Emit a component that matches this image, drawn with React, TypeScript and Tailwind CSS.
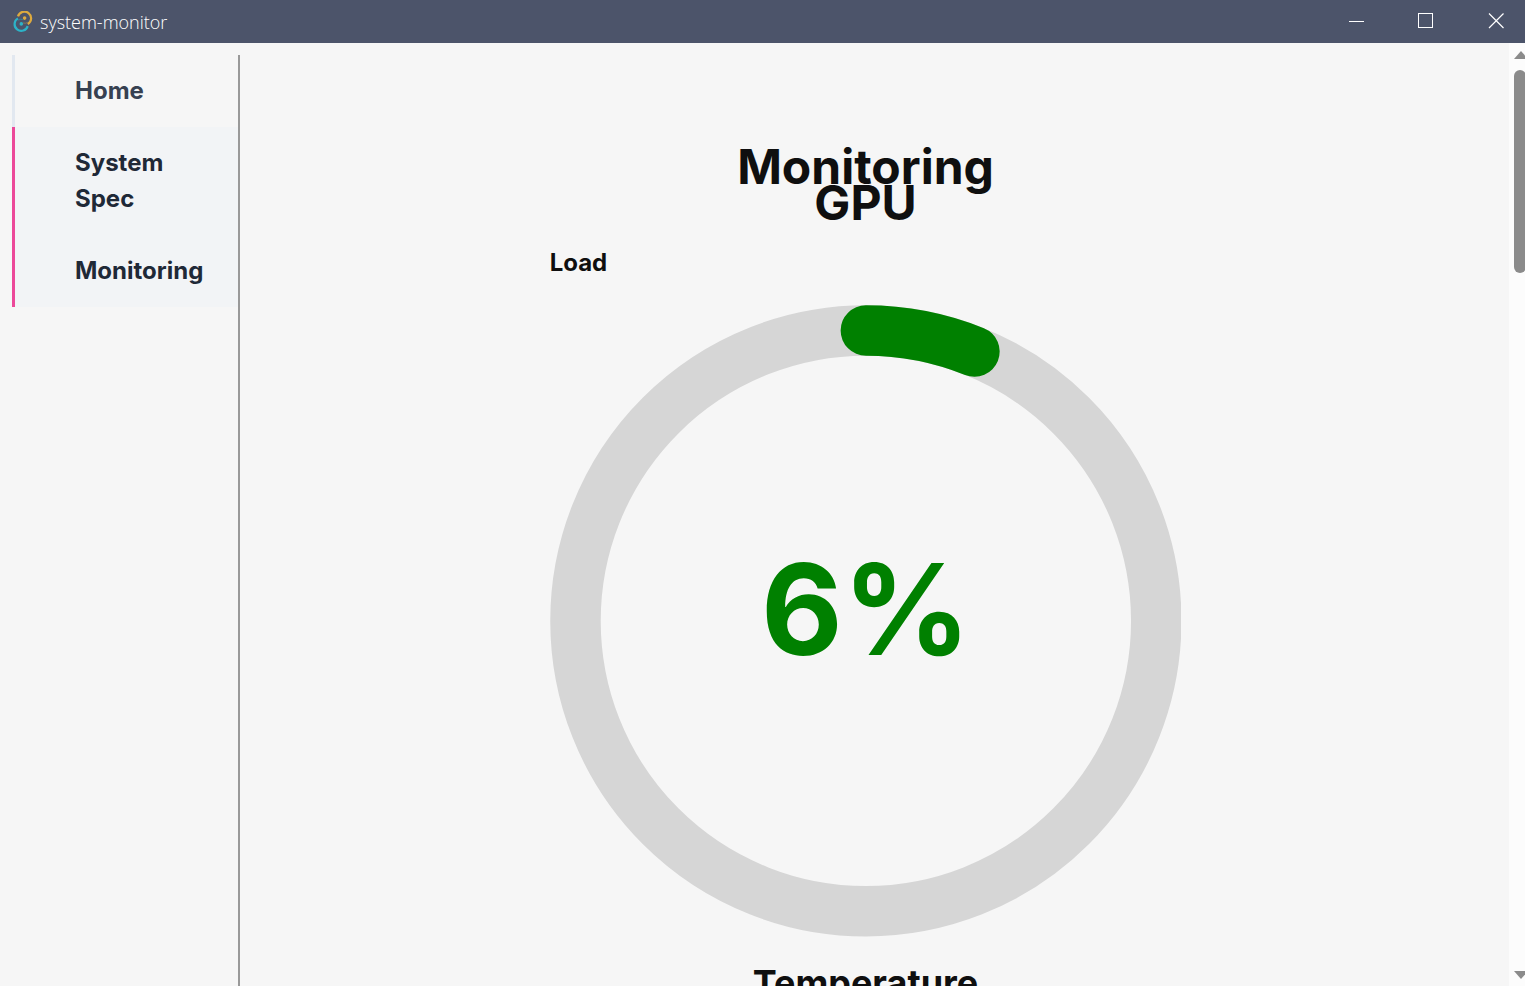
import React from "react";

type NavItem = { label: string; active: boolean };

const navItems: NavItem[] = [
  { label: "Home", active: false },
  { label: "System Spec", active: true },
  { label: "Monitoring", active: true },
];

function AppLogo() {
  return (
    <svg viewBox="0 0 22 22" className="size-[22px]" fill="none" aria-hidden="true">
      <path d="M6 5.4A6.7 6.7 0 1 1 15.8 13.1" stroke="#deaa3e" strokeWidth="2.2" />
      <path d="M15.7 15.1A6.7 6.7 0 1 1 5.9 7.4" stroke="#2cb3c8" strokeWidth="2.2" />
      <path d="M6 9.2Q8.5 7.6 11 8.6" stroke="#2cb3c8" strokeWidth="1" opacity="0.4" />
      <path d="M15.7 11.3Q13.5 12.8 11 12" stroke="#deaa3e" strokeWidth="1" opacity="0.4" />
      <circle cx="12.6" cy="7.1" r="1.8" fill="#deaa3e" />
      <circle cx="9.3" cy="12.9" r="1.8" fill="#2cb3c8" />
    </svg>
  );
}

function TitleBar() {
  return (
    <header className="flex h-[43px] shrink-0 items-center justify-between bg-[#4c546a] pl-3 text-white">
      <div className="flex items-center gap-1.5">
        <AppLogo />
        <span className="font-['Open_Sans','Noto_Sans',sans-serif] text-lg leading-6 font-light">system-monitor</span>
      </div>
      <div className="flex h-full items-center gap-[13px] pr-0.5 pb-px">
        <button type="button" aria-label="Minimize" className="flex h-full w-14 items-center justify-center">
          <svg viewBox="0 0 16 16" className="size-4" shapeRendering="crispEdges" aria-hidden="true">
            <path d="M0 8.5H15" stroke="white" />
          </svg>
        </button>
        <button type="button" aria-label="Maximize" className="flex h-full w-14 items-center justify-center">
          <svg viewBox="0 0 16 16" className="size-4" fill="none" aria-hidden="true">
            <rect x="0.5" y="0.5" width="14" height="14" stroke="white" />
          </svg>
        </button>
        <button type="button" aria-label="Close" className="flex h-full w-14 items-center justify-center">
          <svg viewBox="0 0 16 16" className="size-4 overflow-visible" aria-hidden="true">
            <path d="M2 0.5L16.5 15M16.5 0.5L2 15" stroke="white" strokeWidth="1.2" />
          </svg>
        </button>
      </div>
    </header>
  );
}

function Sidebar() {
  return (
    <nav className="w-[228px] shrink-0 border-r-2 border-[#999999] text-2xl leading-9 font-bold">
      {navItems.map((item) => (
        <a
          key={item.label}
          href="#"
          className={
            item.active
              ? "block border-l-3 border-[#ec4899] bg-[#f2f4f6] py-[18px] pr-[30px] pl-[60px] text-[#1f2937]"
              : "block border-l-3 border-[#e2e8f0] py-[18px] pr-[30px] pl-[60px] text-[#374151]"
          }
        >
          {item.label}
        </a>
      ))}
    </nav>
  );
}

function Gauge({ percent }: { percent: number }) {
  const label = `${Math.round(percent)}%`;
  return (
    <svg viewBox="0 0 632 632" className="block w-full" role="img" aria-label={`Load ${label}`}>
      <circle cx="316" cy="316" r="290.5" fill="none" stroke="#d6d6d6" strokeWidth="50.5" />
      <circle
        cx="316"
        cy="316"
        r="290.5"
        fill="none"
        stroke="#008000"
        strokeWidth="50.5"
        strokeLinecap="round"
        pathLength="100"
        strokeDasharray={`${percent} 100`}
        transform="rotate(-90 316 316)"
      />
      <text x="316" y="350" textAnchor="middle" fontSize="126" fontWeight="700" fill="#008000">
        {label}
      </text>
    </svg>
  );
}

function ScrollBar() {
  return (
    <div className="flex w-4 shrink-0 flex-col overflow-hidden bg-[#fcfcfc] pt-2 pb-[7px] pl-[5px]" aria-hidden="true">
      <svg viewBox="0 0 14 8" className="h-2 w-[14px] shrink-0">
        <path d="M0 8L7 0L14 8Z" fill="#8b8b8b" />
      </svg>
      <div className="mt-[11px] h-[203px] w-3 shrink-0 rounded-full bg-[#8b8b8b]" />
      <svg viewBox="0 0 14 8" className="mt-auto h-2 w-[14px] shrink-0">
        <path d="M0 0L7 8L14 0Z" fill="#8b8b8b" />
      </svg>
    </div>
  );
}

export default function App() {
  return (
    <div className="flex h-screen flex-col overflow-hidden bg-[#f6f6f6] font-['Inter',sans-serif] text-[#0f0f0f]">
      <TitleBar />
      <div className="flex min-h-0 flex-1">
        <div className="flex min-w-0 flex-1 overflow-hidden pt-3 pl-3">
          <Sidebar />
          <main className="flex min-w-0 flex-1 flex-col items-center pt-[94px] pr-[18px]">
            <h1 className="text-5xl leading-9 font-bold">Monitoring</h1>
            <h1 className="text-5xl leading-9 font-bold">GPU</h1>
            <section className="w-[50.5%] pt-6">
              <h2 className="text-2xl leading-9 font-bold">Load</h2>
              <div className="pt-6">
                <Gauge percent={6.1} />
              </div>
            </section>
            <h2 className="pt-7 text-4xl leading-9 font-bold">Temperature</h2>
          </main>
        </div>
        <ScrollBar />
      </div>
    </div>
  );
}
